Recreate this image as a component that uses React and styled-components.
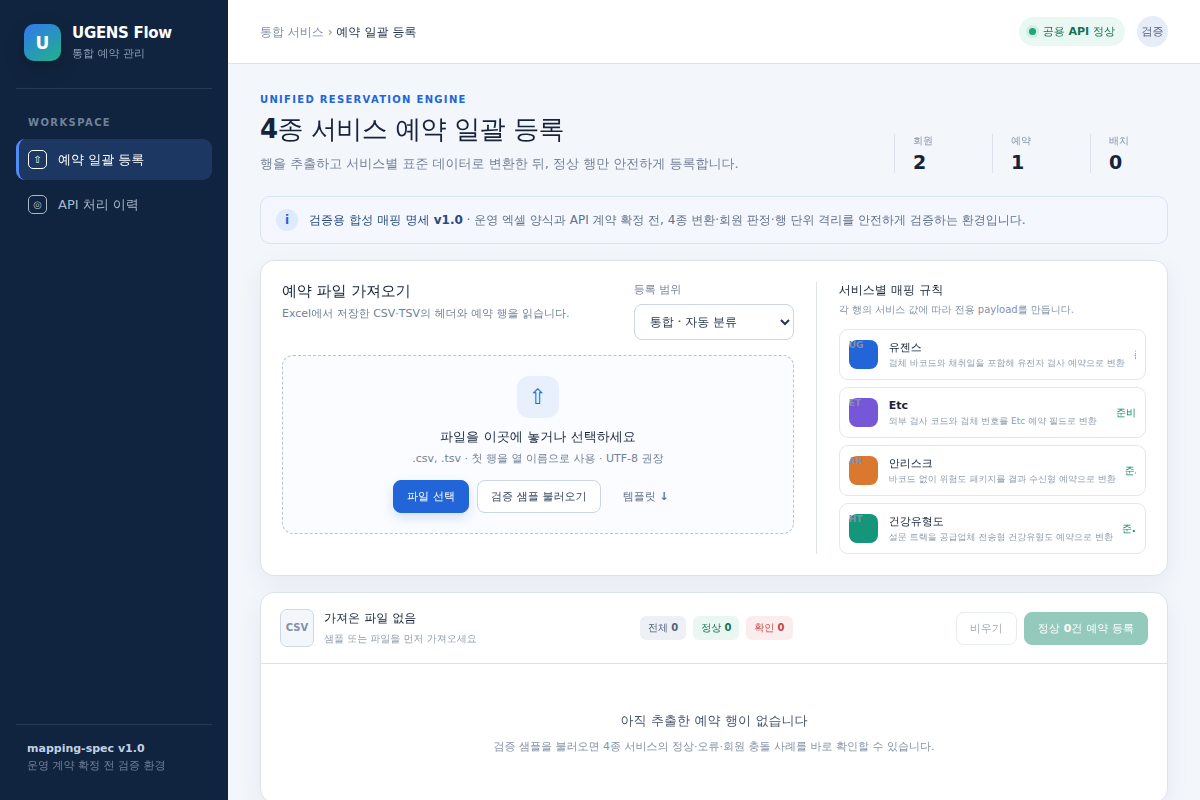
import React from 'react'

import styled, {createGlobalStyle} from 'styled-components'


const GlobalStyle = createGlobalStyle`
    * {
        box-sizing: border-box;
    }

    body {
        margin: 0;
        background: #f3f6fb;
        color: #17233a;
        font-family: "DejaVu Sans", "WenQuanYi Zen Hei", "Noto Sans CJK KR", sans-serif;
        font-size: 13px;
        font-synthesis: none;
        line-height: 20px;
    }

    button, select {
        font-family: inherit;
    }

    h1, h2, h3, p, ul {
        margin: 0;
        padding: 0;
    }
`

const Layout = styled.div`
    display: grid;
    grid-template-columns: 228px minmax(0, 1fr);
    min-height: 100vh;
`

const Sidebar = styled.aside`
    position: sticky;
    top: 0;
    height: 100vh;
    display: flex;
    flex-direction: column;
    padding: 24px 16px;
    background: #11243f;
`

const Brand = styled.div`
    display: flex;
    align-items: flex-start;
    gap: 11px;
    height: 65px;
    padding: 0 8px;
    border-bottom: 1px solid #2a3a54;
`

const Logo = styled.span`
    display: grid;
    place-items: center;
    width: 37px;
    height: 37px;
    border-radius: 10px;
    background: linear-gradient(145deg, #3278ee, #1fb28a);
    box-shadow: 0 8px 20px rgba(0, 0, 0, .2);
    color: #fff;
    font-size: 17px;
    font-weight: 700;
`

const BrandName = styled.strong`
    display: block;
    color: #fff;
    font-size: 15px;
    letter-spacing: -.3px;
    line-height: 18px;
`

const BrandSub = styled.span`
    display: block;
    color: #8f9db3;
    font-size: 11px;
    line-height: 23px;
`

const NavTitle = styled.p`
    && {
        padding: 26px 12px 9px;
    }

    color: #70819b;
    font-size: 10px;
    font-weight: 700;
    letter-spacing: 1.4px;
    line-height: 15px;
`

const NavList = styled.nav`
    display: grid;
    gap: 4px;
`

const NavLink = styled.a`
    display: flex;
    align-items: center;
    gap: 11px;
    height: 41px;
    padding: 0 12px 0 9px;
    border-left: 3px solid ${props => props.$active ? '#4f8df5' : 'transparent'};
    border-radius: 9px;
    background: ${props => props.$active ? '#1c3761' : 'transparent'};
    color: ${props => props.$active ? '#fff' : '#a9b7cb'};
    text-decoration: none;
`

const NavIcon = styled.span`
    display: grid;
    place-items: center;
    width: 19px;
    height: 19px;
    border: 1px solid currentColor;
    border-radius: 5px;
    font-size: 10px;
    line-height: 17px;
`

const SideFooter = styled.div`
    margin-top: auto;
    padding: 15px 11px 2px;
    border-top: 1px solid #2a3a54;
    color: #71819a;
    font-size: 11px;
    line-height: 17px;

    strong {
        display: block;
        color: #c3d0e2;
    }
`

const TopBar = styled.header`
    display: flex;
    align-items: center;
    justify-content: space-between;
    height: 64px;
    padding: 0 32px;
    border-bottom: 1px solid #dce3ed;
    background: #fff;
`

const Crumbs = styled.div`
    color: #8190a5;
    font-size: 12px;

    strong {
        color: #26364e;
    }
`

const TopRight = styled.div`
    display: flex;
    align-items: center;
    gap: 12px;
`

const ApiStatus = styled.span`
    display: flex;
    align-items: center;
    gap: 7px;
    height: 29px;
    padding: 0 10px;
    border-radius: 15px;
    background: #eaf8f3;
    color: #187154;
    font-size: 11px;
    font-weight: 700;

    &::before {
        content: '';
        width: 7px;
        height: 7px;
        border-radius: 50%;
        background: #1ba77b;
        box-shadow: 0 0 0 3px #d2eee3;
    }
`

const Avatar = styled.span`
    display: grid;
    place-items: center;
    width: 31px;
    height: 31px;
    border-radius: 50%;
    background: #e7edf8;
    color: #4c5e7b;
    font-size: 11px;
    font-weight: 700;
`

const Content = styled.main`
    display: grid;
    gap: 16px;
    padding: 28px 32px 40px;
`

const PageHead = styled.div`
    display: flex;
    align-items: flex-end;
    justify-content: space-between;
    padding-bottom: 5px;
`

const Eyebrow = styled.p`
    color: #2165d8;
    font-size: 10px;
    font-weight: 700;
    letter-spacing: 1.3px;
    line-height: 15px;
`

const Title = styled.h1`
    font-size: 26px;
    letter-spacing: -.7px;
    line-height: 45px;
`

const Lead = styled.p`
    color: #748197;
    font-size: 13px;
    line-height: 23px;
`

const Stats = styled.div`
    display: flex;
    padding-bottom: 2px;
`

const Stat = styled.div`
    width: 98px;
    height: 39px;
    padding-left: 18px;
    border-left: 1px solid #dce3ed;
    color: #8491a5;
    font-size: 10px;
    line-height: 14px;

    &:last-child {
        width: 78px;
    }

    strong {
        display: block;
        color: #17233a;
        font-size: 19px;
        line-height: 28px;
    }
`

const Notice = styled.div`
    display: flex;
    align-items: center;
    gap: 11px;
    min-height: 48px;
    padding: 0 15px;
    border: 1px solid #d7e3f6;
    border-radius: 10px;
    background: #f4f7fe;
    color: #62728b;
    font-size: 12px;

    strong {
        color: #284a7c;
    }
`

const NoticeIcon = styled.span`
    display: grid;
    place-items: center;
    flex: none;
    width: 22px;
    height: 22px;
    border-radius: 50%;
    background: #dfeafd;
    color: #2165d8;
    font-weight: 700;
`

const Card = styled.section`
    border: 1px solid #dce3ed;
    border-radius: 14px;
    background: #fff;
    box-shadow: 0 8px 24px rgba(31, 53, 91, .06);
`

const ImportCard = styled(Card)`
    display: grid;
    grid-template-columns: minmax(0, 1.55fr) minmax(0, 1fr);
    gap: 22px;
    padding: 21px;
`

const ImportHead = styled.div`
    display: flex;
    justify-content: space-between;
    margin-bottom: 15px;
`

const SectionTitle = styled.h2`
    && {
        margin-bottom: 2px;
    }

    font-size: 15px;
    letter-spacing: -.2px;
    line-height: 18px;
`

const Hint = styled.p`
    color: #748197;
    font-size: 11px;
    line-height: 24px;
`

const Field = styled.label`
    display: grid;
    gap: 7px;
    width: 160px;
    color: #748197;
    font-size: 11px;
    line-height: 15px;
`

const Select = styled.select`
    width: 100%;
    height: 36px;
    padding: 0 11px;
    border: 1px solid #cbd5e3;
    border-radius: 8px;
    background: #fff;
    color: #26364e;
    font-size: 12px;
`

const DropZone = styled.div`
    display: flex;
    flex-direction: column;
    align-items: center;
    padding: 20px;
    border: 1px dashed #b4c4d9;
    border-radius: 11px;
    background: #fbfcff;
    text-align: center;
`

const DropIcon = styled.span`
    display: grid;
    place-items: center;
    width: 42px;
    height: 42px;
    margin-bottom: 9px;
    border-radius: 12px;
    background: #e9f0fd;
    color: #2165d8;
    font-size: 21px;
`

const DropTitle = styled.h3`
    font-size: 13px;
    line-height: 20px;
`

const ButtonRow = styled.div`
    display: flex;
    gap: 8px;
    margin-top: 9px;
`

const Button = styled.button`
    height: 33px;
    padding: 0 13px;
    border: 1px solid #cbd5e3;
    border-radius: 8px;
    background: #fff;
    color: #34445c;
    font-size: 11px;
    font-weight: 700;

    &:disabled {
        opacity: .45;
    }
`

const PrimaryButton = styled(Button)`
    border-color: #2165d8;
    background: #2165d8;
    box-shadow: 0 5px 12px rgba(34, 101, 220, .18);
    color: #fff;
`

const SubmitButton = styled(Button)`
    border-color: #128b69;
    background: #128b69;
    color: #fff;
`

const GhostButton = styled(Button)`
    border-color: transparent;
    background: transparent;
    color: #62728b;
`

const Rules = styled.div`
    padding-left: 22px;
    border-left: 1px solid #dce3ed;
`

const RulesTitle = styled.h2`
    font-size: 12px;
    line-height: 16px;
`

const RulesHint = styled.p`
    && {
        margin-bottom: 7px;
    }

    color: #8491a5;
    font-size: 10px;
    line-height: 24px;
`

const RuleList = styled.ul`
    display: grid;
    grid-template-columns: minmax(0, 1fr);
    gap: 7px;
    list-style: none;
`

const Rule = styled.li`
    display: flex;
    align-items: center;
    height: 51px;
    padding: 0 9px;
    border: 1px solid #e3e8f0;
    border-radius: 9px;
`

const RuleMark = styled.span`
    flex: none;
    width: 29px;
    height: 29px;
    margin-right: 11px;
    border-radius: 8px;
    background: ${props => props.$color};
    color: #8491a5;
    font-size: 9px;
    font-weight: 700;
    line-height: 11px;
`

const RuleText = styled.div`
    flex: none;
    margin-right: 9px;
    color: #8f9bad;
    font-size: 9px;
    line-height: 14px;
    white-space: nowrap;

    strong {
        display: block;
        color: #17233a;
        font-size: 11px;
        line-height: 17px;
    }
`

const RuleState = styled.span`
    min-width: 0;
    margin-left: auto;
    overflow: hidden;
    color: #128b69;
    font-size: 10px;
    font-weight: 700;
    text-overflow: ellipsis;
    white-space: nowrap;
`

const ResultHead = styled.div`
    display: flex;
    align-items: center;
    justify-content: space-between;
    height: 71px;
    padding: 0 19px;
    border-bottom: 1px solid #dce3ed;
`

const FileInfo = styled.div`
    display: flex;
    align-items: center;
    gap: 10px;
`

const FileBadge = styled.span`
    display: grid;
    place-items: center;
    width: 34px;
    height: 38px;
    border: 1px solid #cbd8ea;
    border-radius: 7px;
    background: #f3f6fb;
    color: #8190a5;
    font-size: 10px;
    font-weight: 700;
`

const FileName = styled.h2`
    font-size: 12px;
    line-height: 22px;
`

const FileHint = styled.p`
    color: #929eaf;
    font-size: 10px;
    line-height: 20px;
`

const Chips = styled.div`
    display: flex;
    gap: 7px;
`

const chipTones = {
    all: ['#edf1f6', '#52627a'],
    ok: ['#e9f6f1', '#187154'],
    check: ['#fbeded', '#bd4646']
}

const Chip = styled.span`
    padding: 0 8px;
    border-radius: 6px;
    background: ${props => chipTones[props.$tone][0]};
    color: ${props => chipTones[props.$tone][1]};
    font-size: 10px;
    line-height: 24px;
`

const Actions = styled.div`
    display: flex;
    gap: 7px;
`

const Empty = styled.div`
    padding: 46px 20px 40px;
    color: #8491a5;
    font-size: 11px;
    line-height: 30px;
    text-align: center;

    h3 {
        color: #45546c;
        font-size: 13px;
        line-height: 22px;
    }
`

const rules = [
    {code: 'UG', name: '유젠스', color: '#2165d8', text: '검체 바코드와 채취일을 포함해 유전자 검사 예약으로 변환'},
    {code: 'ET', name: 'Etc', color: '#7557d8', text: '외부 검사 코드와 검체 번호를 Etc 예약 필드로 변환'},
    {code: 'AR', name: '안리스크', color: '#da7830', text: '바코드 없이 위험도 패키지를 결과 수신형 예약으로 변환'},
    {code: 'HT', name: '건강유형도', color: '#15957a', text: '설문 트랙을 공급업체 전송형 건강유형도 예약으로 변환'}
]

const stats = [['회원', 2], ['예약', 1], ['배치', 0]]

export default function App() {
    return (
        <Layout>
            <GlobalStyle />
            <Sidebar>
                <Brand>
                    <Logo>U</Logo>
                    <div>
                        <BrandName>UGENS Flow</BrandName>
                        <BrandSub>통합 예약 관리</BrandSub>
                    </div>
                </Brand>
                <NavTitle>WORKSPACE</NavTitle>
                <NavList>
                    <NavLink href="#import" $active>
                        <NavIcon>⇧</NavIcon>
                        예약 일괄 등록
                    </NavLink>
                    <NavLink href="#history">
                        <NavIcon>◎</NavIcon>
                        API 처리 이력
                    </NavLink>
                </NavList>
                <SideFooter>
                    <strong>mapping-spec v1.0</strong>
                    운영 계약 확정 전 검증 환경
                </SideFooter>
            </Sidebar>
            <div>
                <TopBar>
                    <Crumbs>통합 서비스 › <strong>예약 일괄 등록</strong></Crumbs>
                    <TopRight>
                        <ApiStatus>공용 API 정상</ApiStatus>
                        <Avatar>검증</Avatar>
                    </TopRight>
                </TopBar>
                <Content>
                    <PageHead>
                        <div>
                            <Eyebrow>UNIFIED RESERVATION ENGINE</Eyebrow>
                            <Title>4종 서비스 예약 일괄 등록</Title>
                            <Lead>행을 추출하고 서비스별 표준 데이터로 변환한 뒤, 정상 행만 안전하게 등록합니다.</Lead>
                        </div>
                        <Stats>
                            {stats.map(([label, value]) => (
                                <Stat key={label}>
                                    {label}
                                    <strong>{value}</strong>
                                </Stat>
                            ))}
                        </Stats>
                    </PageHead>
                    <Notice>
                        <NoticeIcon>i</NoticeIcon>
                        <span>
                            <strong>검증용 합성 매핑 명세 v1.0</strong> · 운영 엑셀 양식과 API 계약 확정 전, 4종 변환·회원 판정·행 단위 격리를 안전하게 검증하는 환경입니다.
                        </span>
                    </Notice>
                    <ImportCard>
                        <div>
                            <ImportHead>
                                <div>
                                    <SectionTitle>예약 파일 가져오기</SectionTitle>
                                    <Hint>Excel에서 저장한 CSV·TSV의 헤더와 예약 행을 읽습니다.</Hint>
                                </div>
                                <Field>
                                    등록 범위
                                    <Select defaultValue="auto">
                                        <option value="auto">통합 · 자동 분류</option>
                                    </Select>
                                </Field>
                            </ImportHead>
                            <DropZone>
                                <DropIcon>⇧</DropIcon>
                                <DropTitle>파일을 이곳에 놓거나 선택하세요</DropTitle>
                                <Hint>.csv, .tsv · 첫 행을 열 이름으로 사용 · UTF-8 권장</Hint>
                                <ButtonRow>
                                    <PrimaryButton>파일 선택</PrimaryButton>
                                    <Button>검증 샘플 불러오기</Button>
                                    <GhostButton>템플릿 ↓</GhostButton>
                                </ButtonRow>
                            </DropZone>
                        </div>
                        <Rules>
                            <RulesTitle>서비스별 매핑 규칙</RulesTitle>
                            <RulesHint>각 행의 서비스 값에 따라 전용 payload를 만듭니다.</RulesHint>
                            <RuleList>
                                {rules.map(rule => (
                                    <Rule key={rule.code}>
                                        <RuleMark $color={rule.color}>{rule.code}</RuleMark>
                                        <RuleText>
                                            <strong>{rule.name}</strong>
                                            {rule.text}
                                        </RuleText>
                                        <RuleState>준비</RuleState>
                                    </Rule>
                                ))}
                            </RuleList>
                        </Rules>
                    </ImportCard>
                    <Card>
                        <ResultHead>
                            <FileInfo>
                                <FileBadge>CSV</FileBadge>
                                <div>
                                    <FileName>가져온 파일 없음</FileName>
                                    <FileHint>샘플 또는 파일을 먼저 가져오세요</FileHint>
                                </div>
                            </FileInfo>
                            <Chips>
                                <Chip $tone="all">전체 <b>0</b></Chip>
                                <Chip $tone="ok">정상 <b>0</b></Chip>
                                <Chip $tone="check">확인 <b>0</b></Chip>
                            </Chips>
                            <Actions>
                                <Button disabled>비우기</Button>
                                <SubmitButton disabled>정상 0건 예약 등록</SubmitButton>
                            </Actions>
                        </ResultHead>
                        <Empty>
                            <h3>아직 추출한 예약 행이 없습니다</h3>
                            검증 샘플을 불러오면 4종 서비스의 정상·오류·회원 충돌 사례를 바로 확인할 수 있습니다.
                        </Empty>
                    </Card>
                </Content>
            </div>
        </Layout>
    )
}
